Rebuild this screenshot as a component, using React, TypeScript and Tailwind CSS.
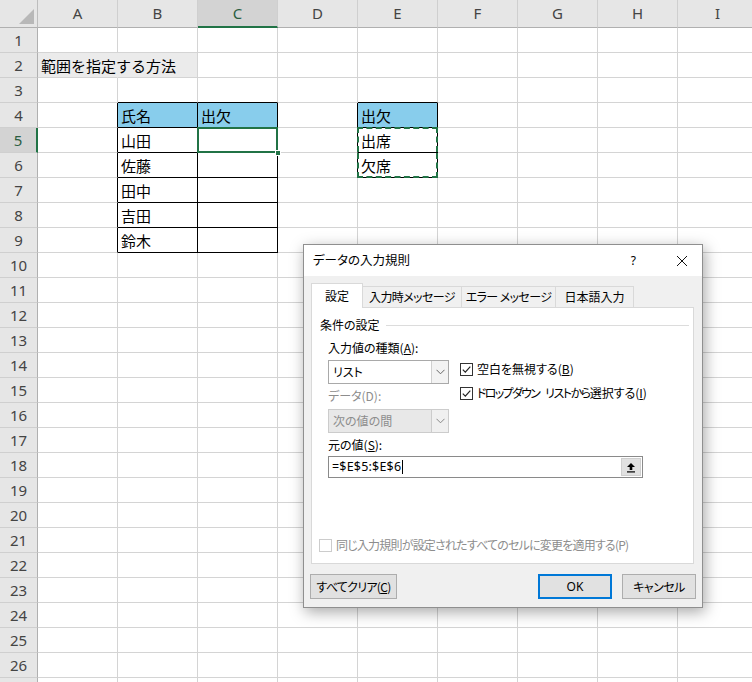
import React from "react";

const COLS = ["A", "B", "C", "D", "E", "F", "G", "H", "I"];
const ROWS = Array.from({ length: 27 }, (_, i) => i + 1);

const TEXT: Record<string, string> = {
  "2-0": "範囲を指定する方法",
  "4-1": "氏名",
  "4-2": "出欠",
  "5-1": "山田",
  "6-1": "佐藤",
  "7-1": "田中",
  "8-1": "吉田",
  "9-1": "鈴木",
  "4-4": "出欠",
  "5-4": "出席",
  "6-4": "欠席",
};

function rightCls(r: number, c: number): string {
  if (r === 2 && c === 0) return "border-r-[#ebebeb]";
  if (r >= 4 && r <= 9 && c <= 2) return "border-r-black";
  if (r >= 4 && r <= 6 && (c === 3 || c === 4)) return "border-r-black";
  return "border-r-[#d4d4d4]";
}
function bottomCls(r: number, c: number): string {
  if (r >= 3 && r <= 9 && (c === 1 || c === 2)) return "border-b-black";
  if (r >= 3 && r <= 6 && c === 4) return "border-b-black";
  return "border-b-[#d4d4d4]";
}
function bgCls(r: number, c: number): string {
  if (r === 4 && (c === 1 || c === 2 || c === 4)) return "bg-[#88cdec]";
  if (r === 2 && (c === 0 || c === 1)) return "bg-[#ebebeb]";
  return "bg-white";
}

function Cell({ r, c }: { r: number; c: number }) {
  const text = TEXT[`${r}-${c}`];
  const z = r === 2 && c === 0 ? "z-[2]" : r === 5 && c === 2 ? "z-[3]" : "z-0";
  return (
    <div
      className={`relative ${z} shrink-0 w-[80px] h-[25px] border-r border-b ${rightCls(r, c)} ${bottomCls(r, c)} ${bgCls(r, c)} flex items-center pl-[3px] pt-[1px] whitespace-nowrap text-[15px] leading-none text-black font-['Noto_Sans_CJK_JP',sans-serif]`}
    >
      {text}
      {r === 5 && c === 2 && (
        <>
          <div className="absolute -left-[1px] -top-[1px] -right-[1px] -bottom-[1px] border-2 border-[#217346]" />
          <div className="absolute -right-[4px] -bottom-[4px] w-[6px] h-[6px] bg-[#217346] border border-white" />
        </>
      )}
      {r === 5 && c === 4 && (
        <div className="absolute -left-[1px] -top-[1px] -right-[1px] bottom-0 border-t-2 border-l-2 border-r-2 border-dashed border-[#217346]" />
      )}
      {r === 6 && c === 4 && (
        <div className="absolute -left-[1px] top-0 -right-[1px] -bottom-[1px] border-b-2 border-l-2 border-r-2 border-dashed border-[#217346]" />
      )}
    </div>
  );
}

function Sheet() {
  return (
    <div className="flex flex-col">
      <div className="flex">
        <div className="relative shrink-0 w-[38px] h-[28px] bg-[#e6e6e6] border-r border-b border-r-[#bdbdbd] border-b-[#b0b0b0]">
          <svg className="absolute left-0 top-0" width="38" height="28" viewBox="0 0 38 28">
            <polygon points="34,9 34,24 19,24" fill="#b8b8b8" />
          </svg>
        </div>
        {COLS.map((l, c) => (
          <div
            key={l}
            className={
              c === 2
                ? "shrink-0 w-[80px] h-[28px] bg-[#d3d3d3] border-r border-r-[#cfcfcf] border-b-2 border-b-[#217346] flex items-center justify-center text-[15px] text-[#2a5d40] font-['Noto_Sans',sans-serif]"
                : "shrink-0 w-[80px] h-[28px] bg-[#e6e6e6] border-r border-r-[#cfcfcf] border-b border-b-[#b0b0b0] flex items-center justify-center text-[15px] text-[#444] font-['Noto_Sans',sans-serif]"
            }
          >
            {l}
          </div>
        ))}
      </div>
      {ROWS.map((r) => (
        <div key={r} className="flex">
          <div
            className={
              r === 5
                ? "shrink-0 w-[38px] h-[25px] bg-[#d3d3d3] border-r-2 border-b border-r-[#217346] border-b-[#cfcfcf] flex items-center justify-center text-[15px] text-[#2a5d40] font-['Noto_Sans',sans-serif]"
                : "shrink-0 w-[38px] h-[25px] bg-[#e6e6e6] border-r border-b border-r-[#b0b0b0] border-b-[#cfcfcf] flex items-center justify-center text-[15px] text-[#444] font-['Noto_Sans',sans-serif]"
            }
          >
            {r}
          </div>
          {COLS.map((l, c) => (
            <Cell key={l} r={r} c={c} />
          ))}
        </div>
      ))}
    </div>
  );
}

function CheckBox({ checked, disabled }: { checked?: boolean; disabled?: boolean }) {
  return (
    <span
      className={
        disabled
          ? "shrink-0 w-[13px] h-[13px] border border-[#cccccc] bg-white flex items-center justify-center"
          : "shrink-0 w-[13px] h-[13px] border border-[#333333] bg-white flex items-center justify-center"
      }
    >
      {checked && (
        <svg width="11" height="11" viewBox="0 0 11 11">
          <path d="M1.8 5.6 L4.3 8.1 L9.3 2.6" stroke="#222" strokeWidth="1.2" fill="none" />
        </svg>
      )}
    </span>
  );
}

function Chevron({ color }: { color: string }) {
  return (
    <svg width="9" height="6" viewBox="0 0 9 6">
      <path d="M0.5 0.8 L4.5 4.8 L8.5 0.8" stroke={color} strokeWidth="1" fill="none" />
    </svg>
  );
}

function Dialog() {
  return (
    <div className="absolute left-[303px] top-[244px] w-[400px] h-[364px] bg-[#f0f0f0] border border-[#8f8f8f] shadow-[2px_4px_14px_rgba(0,0,0,0.35)] flex flex-col text-[12px] leading-none text-black font-['Noto_Sans_CJK_JP',sans-serif] [font-feature-settings:'palt']">
      {/* title bar */}
      <div className="h-[31px] bg-white flex items-center pl-[9px] pr-[14px]">
        <span className="text-[12.5px]">データの入力規則</span>
        <span className="ml-auto mr-[40px] text-[12px] font-['Noto_Sans',sans-serif]">?</span>
        <svg width="12" height="12" viewBox="0 0 12 12">
          <path d="M1 1 L11 11 M11 1 L1 11" stroke="#111" strokeWidth="1" />
        </svg>
      </div>
      {/* tabs */}
      <div className="pl-[7px] pr-[8px] pt-[7px] flex flex-col">
        <div className="flex items-end h-[24px]">
          <div className="relative z-[1] w-[52px] h-[25px] -mb-[1px] bg-white border-t border-l border-r border-[#d9d9d9] flex items-center justify-center">
            設定
          </div>
          <div className="w-[99px] h-[21px] bg-[#f0f0f0] border-t border-r border-[#d9d9d9] flex items-center justify-center tracking-[-0.6px]">
            入力時メッセージ
          </div>
          <div className="w-[94px] h-[21px] bg-[#f0f0f0] border-t border-r border-[#d9d9d9] flex items-center justify-center tracking-[-0.6px]">
            エラー メッセージ
          </div>
          <div className="w-[78px] h-[21px] bg-[#f0f0f0] border-t border-r border-[#d9d9d9] flex items-center justify-center">
            日本語入力
          </div>
        </div>
        {/* panel */}
        <div className="h-[257px] bg-white border border-[#d9d9d9] flex flex-col">
          <div className="mt-[9px] pl-[8px] pr-[4px] h-[16px] flex items-center">
            <span>条件の設定</span>
            <div className="flex-1 ml-[6px] h-px bg-[#dcdcdc]" />
          </div>
          <div className="pl-[16px] flex flex-col">
            <div className="mt-[7px] h-[16px] flex items-center">
              入力値の種類(<span className="underline">A</span>):
            </div>
            <div className="mt-[4px] flex">
              <div className="w-[121px] flex flex-col">
                <div className="h-[24px] border border-[#a9a9a9] bg-white flex">
                  <div className="flex-1 flex items-center pl-[4px]">リスト</div>
                  <div className="w-[17px] border-l border-[#d0d0d0] bg-[#f3f3f3] flex items-center justify-center">
                    <Chevron color="#666" />
                  </div>
                </div>
                <div className="mt-[4px] h-[16px] flex items-center text-[#8d8d8d]">データ(D):</div>
                <div className="mt-[5px] h-[24px] border border-[#cccccc] bg-[#e8e8e8] flex">
                  <div className="flex-1 flex items-center pl-[4px] text-[#8d8d8d]">次の値の間</div>
                  <div className="w-[17px] border-l border-[#cccccc] bg-[#f0f0f0] flex items-center justify-center">
                    <Chevron color="#888" />
                  </div>
                </div>
              </div>
              <div className="ml-[11px] pt-[1px] flex flex-col gap-[8px]">
                <div className="h-[16px] flex items-center gap-[4px]">
                  <CheckBox checked />
                  <span>
                    空白を無視する(<span className="underline">B</span>)
                  </span>
                </div>
                <div className="h-[16px] flex items-center gap-[4px]">
                  <CheckBox checked />
                  <span className="whitespace-pre">
                    <span className="tracking-[-1.7px]">ドロップダウン</span>
                    <span className="inline-block w-[6px]" />
                    <span className="tracking-[-1.5px]">リストから</span>選択する(<span className="underline">I</span>)
                  </span>
                </div>
              </div>
            </div>
            <div className="mt-[4px] h-[16px] flex items-center">
              元の値(<span className="underline">S</span>):
            </div>
            <div className="mt-[3px] w-[315px] h-[22px] border border-[#8a8a8a] bg-white flex items-center pl-[3px]">
              <span className="text-[12.5px] font-['Noto_Sans',sans-serif] tracking-[0.2px]">=$E$5:$E$6</span>
              <span className="w-px h-[14px] bg-black ml-[1px]" />
              <div className="ml-auto mr-[1px] w-[20px] h-[18px] bg-[#e1e1e1] border border-[#cfcfcf] flex items-center justify-center">
                <svg width="10" height="11" viewBox="0 0 10 11">
                  <path d="M5 1 L9 5 L6.3 5 L6.3 8 L3.7 8 L3.7 5 L1 5 Z" fill="#000" />
                  <rect x="1" y="9.3" width="8" height="1.2" fill="#000" />
                </svg>
              </div>
            </div>
          </div>
          <div className="mt-[59px] pl-[7px] h-[16px] flex items-center gap-[4px] text-[#8d8d8d]">
            <CheckBox disabled />
            <span className="tracking-[-0.8px]">同じ入力規則が設定されたすべてのセルに変更を適用する(P)</span>
          </div>
        </div>
      </div>
      {/* buttons */}
      <div className="mt-[10px] px-[6px] flex">
        <div className="w-[87px] h-[25px] bg-[#e1e1e1] border border-[#adadad] flex items-center justify-center tracking-[-0.7px]">
          すべてクリア(<span className="underline">C</span>)
        </div>
        <div className="ml-auto w-[74px] h-[25px] bg-[#e1e1e1] border-2 border-[#0078d7] flex items-center justify-center font-['Noto_Sans',sans-serif]">
          OK
        </div>
        <div className="ml-[10px] w-[74px] h-[25px] bg-[#e1e1e1] border border-[#adadad] flex items-center justify-center tracking-[-0.5px]">
          キャンセル
        </div>
      </div>
    </div>
  );
}

export default function App() {
  return (
    <div className="relative w-[752px] h-[682px] overflow-hidden bg-white">
      <Sheet />
      <Dialog />
    </div>
  );
}
